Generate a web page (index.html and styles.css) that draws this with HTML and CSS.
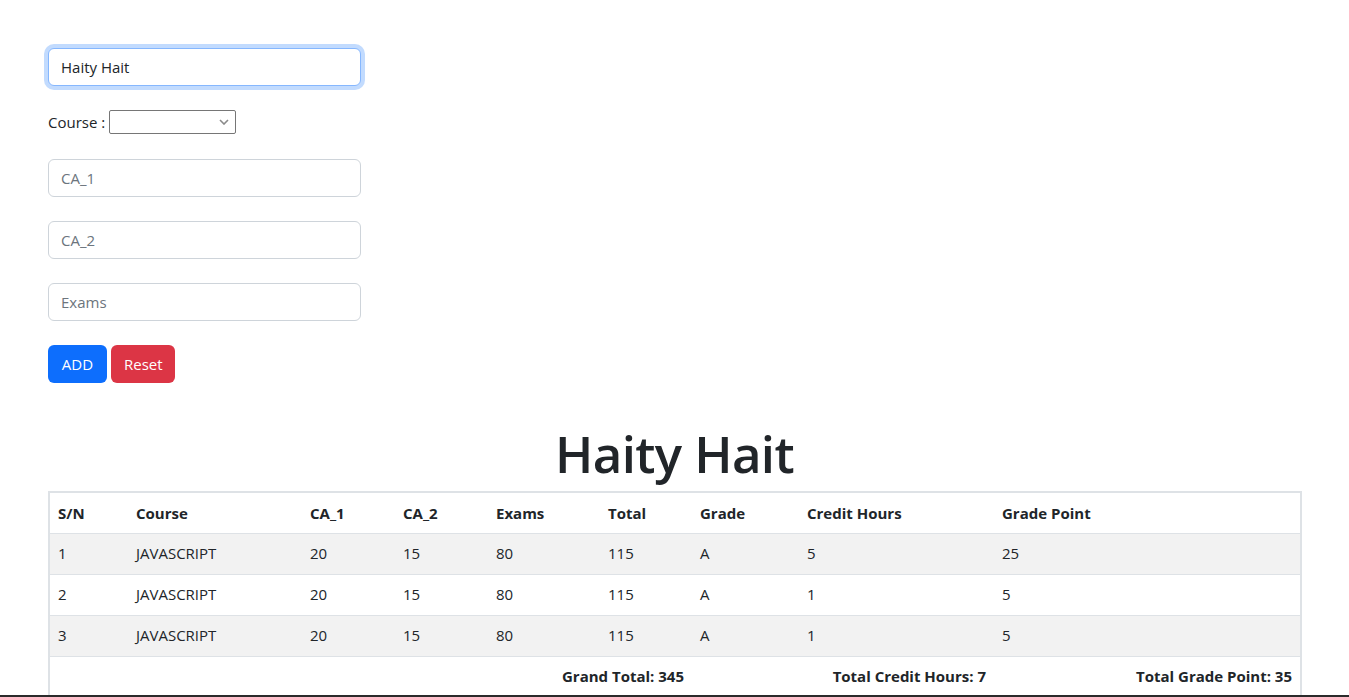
FILE: index.html
```html
<!DOCTYPE html>
<html lang="en">
<head>
<meta charset="utf-8">
<title>Result</title>
<link rel="stylesheet" href="styles.css">
</head>
<body>
<div class="page">
  <form class="entry">
    <input class="field is-focused" type="text" value="Haity Hait">
    <div class="course-row">
      <label class="course-label">Course :</label>
      <span class="select">
        <svg class="chev" width="10" height="6" viewBox="0 0 10 6"><path d="M1 1l4 4 4-4" fill="none" stroke="#8a8a8a" stroke-width="1.6"/></svg>
      </span>
    </div>
    <input class="field" type="text" placeholder="CA_1">
    <input class="field" type="text" placeholder="CA_2">
    <input class="field" type="text" placeholder="Exams">
    <div class="buttons">
      <button type="button" class="btn btn-blue">ADD</button>
      <button type="button" class="btn btn-red">Reset</button>
    </div>
  </form>

  <h1 class="title">Haity Hait</h1>

  <table class="results">
    <colgroup>
      <col class="c1"><col class="c2"><col class="c3"><col class="c4"><col class="c5"><col class="c6"><col class="c7"><col class="c8"><col class="c9">
    </colgroup>
    <thead>
      <tr><th>S/N</th><th>Course</th><th>CA_1</th><th>CA_2</th><th>Exams</th><th>Total</th><th>Grade</th><th>Credit Hours</th><th>Grade Point</th></tr>
    </thead>
    <tbody>
      <tr class="odd"><td>1</td><td>JAVASCRIPT</td><td>20</td><td>15</td><td>80</td><td>115</td><td>A</td><td>5</td><td>25</td></tr>
      <tr><td>2</td><td>JAVASCRIPT</td><td>20</td><td>15</td><td>80</td><td>115</td><td>A</td><td>1</td><td>5</td></tr>
      <tr class="odd"><td>3</td><td>JAVASCRIPT</td><td>20</td><td>15</td><td>80</td><td>115</td><td>A</td><td>1</td><td>5</td></tr>
      <tr class="totals"><td colspan="6">Grand Total: 345</td><td colspan="2">Total Credit Hours: 7</td><td>Total Grade Point: 35</td></tr>
    </tbody>
  </table>
</div>
<div class="screen-edge"></div>
</body>
</html>
```

FILE: styles.css
```css
* { box-sizing: border-box; }
html, body { margin: 0; padding: 0; background: #fff; }
body {
  font-family: "Open Sans", "Noto Sans", sans-serif;
  font-size: 15px;
  color: #212529;
  line-height: 1.5;
}
.page { padding: 48px 48px 0 48px; }

.entry { display: flex; flex-direction: column; align-items: flex-start; gap: 24px; }
.field {
  width: 313px;
  height: 38px;
  padding: 6px 12px;
  font: inherit;
  color: #212529;
  border: 1px solid #ced4da;
  border-radius: 6px;
  background: #fff;
  outline: none;
}
.field::placeholder { color: #6c757d; }
.field.is-focused {
  border-color: #86b7fe;
  box-shadow: 0 0 0 4px rgba(13, 110, 253, 0.25);
}
.course-row { display: flex; align-items: center; gap: 4px; height: 24px; margin: 0 0 1px; }
.course-label { line-height: 24px; }
.select {
  width: 127px;
  height: 24px;
  border: 1px solid #767676;
  border-radius: 2px;
  display: flex;
  justify-content: flex-end;
  align-items: center;
  padding-right: 6px;
}
.buttons { display: flex; gap: 4px; }
.btn {
  height: 38px;
  padding: 0 12px;
  font: inherit;
  color: #fff;
  border: 1px solid transparent;
  border-radius: 6px;
}
.btn-blue { background: #0d6efd; width: 59px; }
.btn-red { background: #dc3545; width: 64px; }

.title {
  text-align: center;
  font-size: 51px;
  font-weight: 600;
  line-height: 62px;
  margin: 39px 0 7px;
  letter-spacing: -0.6px;
}

.results {
  width: 1252px;
  border-collapse: collapse;
  table-layout: fixed;
  border: 2px solid #dee2e6;
}
.c1 { width: 79px; } .c2 { width: 174px; } .c3 { width: 93px; } .c4 { width: 93px; }
.c5 { width: 112px; } .c6 { width: 92px; } .c7 { width: 107px; } .c8 { width: 195px; } .c9 { width: 307px; }
.results th, .results td {
  padding: 8px 8px;
  height: 41px;
  text-align: left;
  border-bottom: 1px solid #dee2e6;
  white-space: nowrap;
}
.results th { font-weight: 700; }
.results tr.odd td { background: #f2f2f2; }
.results tr.totals td { text-align: right; font-weight: 700; }

.screen-edge {
  position: fixed;
  left: 0; right: 0; bottom: 0;
  height: 2px;
  background: #2b2b2b;
}
```
